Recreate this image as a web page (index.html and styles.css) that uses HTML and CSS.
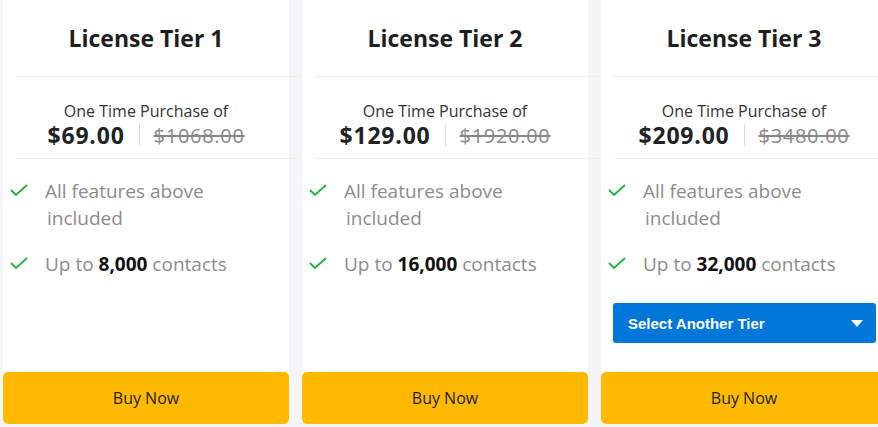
FILE: index.html
```html
<!DOCTYPE html>
<html>
<head>
    <title>License Tiers</title>
    <link rel="stylesheet" href="styles.css">
</head>
<body>
    <div class="tiers">
        <div class="tier-card">
            <div class="tier-head">License Tier 1</div>
            <div class="rule"></div>
            <div class="price-box">
                <div class="price-label">One Time Purchase of</div>
                <div class="price-row">
                    <span class="price-now">$69.00</span>
                    <span class="price-bar"></span>
                    <span class="price-old">$1068.00</span>
                </div>
            </div>
            <div class="rule"></div>
            <ul class="features">
                <li><svg class="check" viewBox="0 0 18 12"><polyline points="1,6 6,11 17,1"/></svg><span class="feat-text">All features above<br><span class="indent">included</span></span></li>
                <li><svg class="check" viewBox="0 0 18 12"><polyline points="1,6 6,11 17,1"/></svg><span class="feat-text">Up to <b>8,000</b> contacts</span></li>
            </ul>
            <button class="buy-btn">Buy Now</button>
        </div>

        <div class="tier-card">
            <div class="tier-head">License Tier 2</div>
            <div class="rule"></div>
            <div class="price-box">
                <div class="price-label">One Time Purchase of</div>
                <div class="price-row">
                    <span class="price-now">$129.00</span>
                    <span class="price-bar"></span>
                    <span class="price-old">$1920.00</span>
                </div>
            </div>
            <div class="rule"></div>
            <ul class="features">
                <li><svg class="check" viewBox="0 0 18 12"><polyline points="1,6 6,11 17,1"/></svg><span class="feat-text">All features above<br><span class="indent">included</span></span></li>
                <li><svg class="check" viewBox="0 0 18 12"><polyline points="1,6 6,11 17,1"/></svg><span class="feat-text">Up to <b>16,000</b> contacts</span></li>
            </ul>
            <button class="buy-btn">Buy Now</button>
        </div>

        <div class="tier-card">
            <div class="tier-head">License Tier 3</div>
            <div class="rule"></div>
            <div class="price-box">
                <div class="price-label">One Time Purchase of</div>
                <div class="price-row">
                    <span class="price-now">$209.00</span>
                    <span class="price-bar"></span>
                    <span class="price-old">$3480.00</span>
                </div>
            </div>
            <div class="rule"></div>
            <ul class="features">
                <li><svg class="check" viewBox="0 0 18 12"><polyline points="1,6 6,11 17,1"/></svg><span class="feat-text">All features above<br><span class="indent">included</span></span></li>
                <li><svg class="check" viewBox="0 0 18 12"><polyline points="1,6 6,11 17,1"/></svg><span class="feat-text">Up to <b>32,000</b> contacts</span></li>
            </ul>
            <div class="tier-select">
                <span>Select Another Tier</span>
                <span class="caret"></span>
            </div>
            <button class="buy-btn">Buy Now</button>
        </div>
    </div>
</body>
</html>
```

FILE: styles.css
```css
body {
    margin: 0;
    padding: 0;
    background: #f5f5f7;
    font-family: "Open Sans", Arial, sans-serif;
    overflow: hidden;
}

.tiers {
    display: flex;
    flex-direction: row;
    gap: 13px;
    padding-left: 3px;
    height: 424px;
}

.tier-card {
    flex: 0 0 286px;
    width: 286px;
    background: #fff;
    display: flex;
    flex-direction: column;
}

.tier-head {
    height: 76px;
    line-height: 76px;
    text-align: center;
    font-size: 23px;
    font-weight: 700;
    color: #1e1e1e;
}

.rule {
    height: 1px;
    width: 286px;
    margin-left: 12px;
    background: #eeeeee;
    flex-shrink: 0;
}

.price-box {
    padding-top: 24px;
    height: 57px;
    text-align: center;
}

.price-label {
    font-size: 16px;
    line-height: 20px;
    color: #333;
}

.price-row {
    display: flex;
    justify-content: center;
    align-items: center;
    gap: 14px;
    height: 26px;
    margin-top: 1px;
}

.price-now {
    font-size: 23px;
    font-weight: 700;
    letter-spacing: 0.8px;
    color: #222;
}

.price-bar {
    width: 1px;
    height: 22px;
    background: #dddddd;
}

.price-old {
    font-size: 20px;
    letter-spacing: 0.7px;
    color: #888;
    text-decoration: line-through;
}

.features {
    list-style: none;
    margin: 19px 0 0 0;
    padding: 0 0 0 7px;
}

.features li {
    display: flex;
    align-items: flex-start;
    margin-bottom: 19px;
}

.check {
    width: 18px;
    height: 12px;
    margin-top: 6px;
    flex-shrink: 0;
    fill: none;
    stroke: #1db43e;
    stroke-width: 1.8;
}

.feat-text {
    margin-left: 17px;
    font-size: 19px;
    line-height: 27px;
    color: #8c8c8c;
}

.feat-text .indent {
    padding-left: 2px;
}

.feat-text b {
    color: #111;
}

.tier-select {
    margin: 6px 11px 0 12px;
    height: 40px;
    background: #0077d9;
    border-radius: 3px;
    color: #fff;
    font-family: "Liberation Sans", Arial, sans-serif;
    font-weight: 700;
    font-size: 15px;
    display: flex;
    align-items: center;
    justify-content: space-between;
    padding: 0 13px 0 15px;
}

.caret {
    width: 0;
    height: 0;
    border-left: 6px solid transparent;
    border-right: 6px solid transparent;
    border-top: 7px solid #fff;
}

.buy-btn {
    margin-top: auto;
    height: 52px;
    border: none;
    border-radius: 5px;
    background: #ffba00;
    color: #222;
    font-family: "Open Sans", Arial, sans-serif;
    font-size: 16px;
    font-weight: 500;
    cursor: pointer;
}
```
